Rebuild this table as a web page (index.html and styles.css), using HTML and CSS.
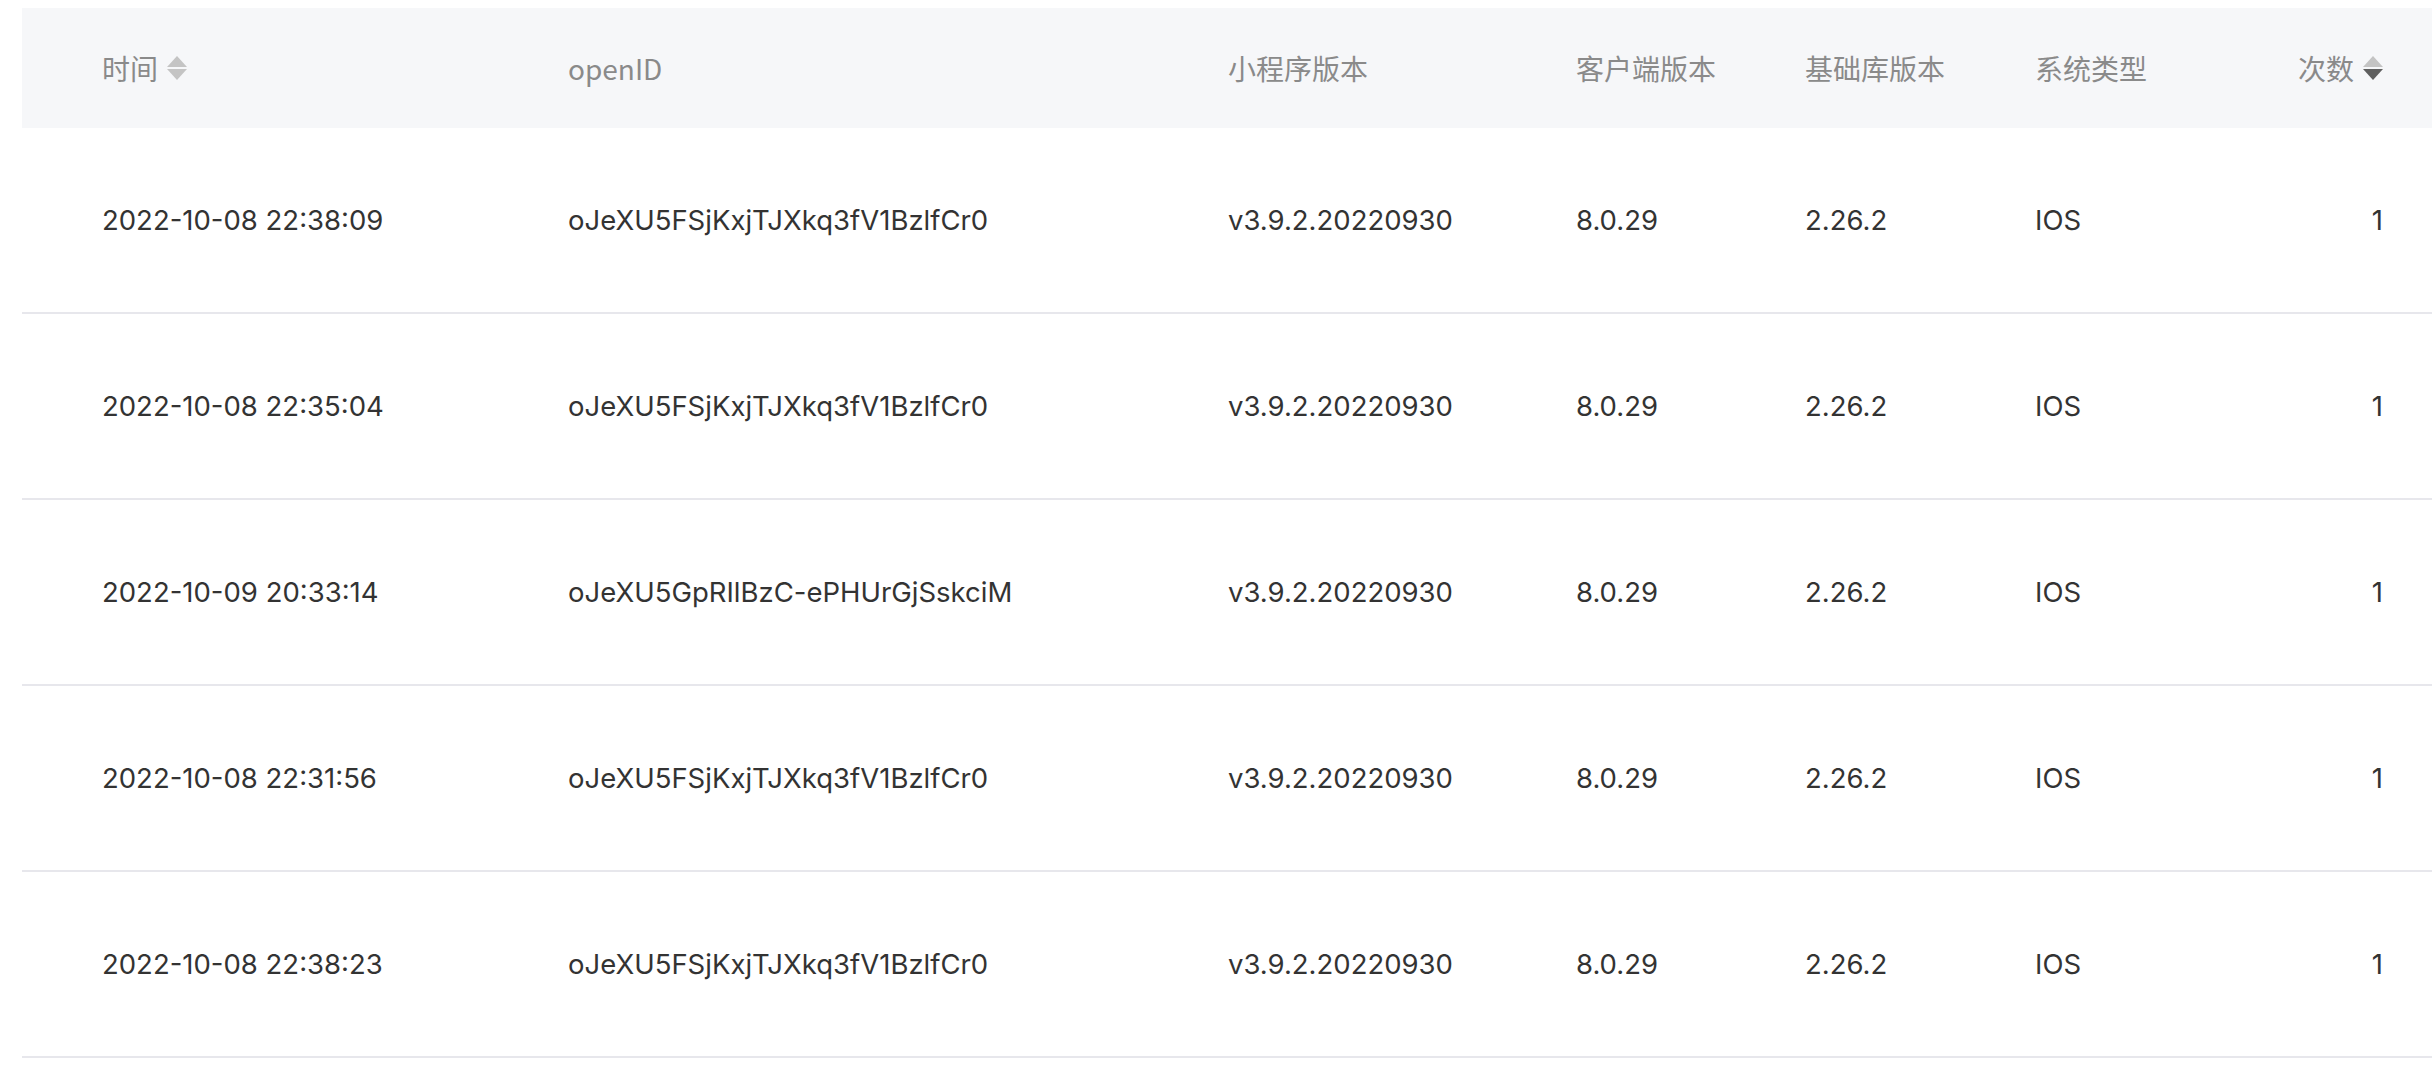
FILE: index.html
```html
<!DOCTYPE html>
<html lang="zh-CN">
<head>
<meta charset="utf-8">
<title>Table</title>
<link rel="stylesheet" href="styles.css">
</head>
<body>
<div class="wrap">
  <div class="table">
    <div class="row head">
      <div class="cell">时间<span class="sort"><i class="up"></i><i class="down"></i></span></div>
      <div class="cell">openID</div>
      <div class="cell">小程序版本</div>
      <div class="cell">客户端版本</div>
      <div class="cell">基础库版本</div>
      <div class="cell">系统类型</div>
      <div class="cell num">次数<span class="sort"><i class="up"></i><i class="down active"></i></span></div>
    </div>
    <div class="row">
      <div class="cell">2022-10-08 22:38:09</div>
      <div class="cell">oJeXU5FSjKxjTJXkq3fV1BzlfCr0</div>
      <div class="cell">v3.9.2.20220930</div>
      <div class="cell">8.0.29</div>
      <div class="cell">2.26.2</div>
      <div class="cell">IOS</div>
      <div class="cell num">1</div>
    </div>
    <div class="row">
      <div class="cell">2022-10-08 22:35:04</div>
      <div class="cell">oJeXU5FSjKxjTJXkq3fV1BzlfCr0</div>
      <div class="cell">v3.9.2.20220930</div>
      <div class="cell">8.0.29</div>
      <div class="cell">2.26.2</div>
      <div class="cell">IOS</div>
      <div class="cell num">1</div>
    </div>
    <div class="row">
      <div class="cell">2022-10-09 20:33:14</div>
      <div class="cell">oJeXU5GpRIlBzC-ePHUrGjSskciM</div>
      <div class="cell">v3.9.2.20220930</div>
      <div class="cell">8.0.29</div>
      <div class="cell">2.26.2</div>
      <div class="cell">IOS</div>
      <div class="cell num">1</div>
    </div>
    <div class="row">
      <div class="cell">2022-10-08 22:31:56</div>
      <div class="cell">oJeXU5FSjKxjTJXkq3fV1BzlfCr0</div>
      <div class="cell">v3.9.2.20220930</div>
      <div class="cell">8.0.29</div>
      <div class="cell">2.26.2</div>
      <div class="cell">IOS</div>
      <div class="cell num">1</div>
    </div>
    <div class="row">
      <div class="cell">2022-10-08 22:38:23</div>
      <div class="cell">oJeXU5FSjKxjTJXkq3fV1BzlfCr0</div>
      <div class="cell">v3.9.2.20220930</div>
      <div class="cell">8.0.29</div>
      <div class="cell">2.26.2</div>
      <div class="cell">IOS</div>
      <div class="cell num">1</div>
    </div>
  </div>
</div>
</body>
</html>
```

FILE: styles.css
```css
html, body {
  margin: 0;
  padding: 0;
  background: #ffffff;
}
body {
  font-family: "Inter", "Noto Sans CJK SC", sans-serif;
  font-size: 27.5px;
  color: #333333;
}
.wrap {
  padding: 8px 0 0 22px;
}
.table {
  display: flex;
  flex-direction: column;
}
.row {
  display: grid;
  grid-template-columns: 466px 660px 348px 229px 230px 1fr auto;
  padding: 0 49px 0 80px;
  height: 184px;
  align-items: center;
  border-bottom: 2px solid #e7e7ec;
}
.row.head {
  height: 120px;
  background: #f6f7f9;
  border-bottom: none;
  color: #8a8a8a;
  font-size: 28px;
  font-family: "Noto Sans CJK SC", "Inter", sans-serif;
}
.cell {
  display: flex;
  align-items: center;
  white-space: nowrap;
}
.cell.num {
  justify-content: flex-end;
}
.sort {
  display: inline-flex;
  flex-direction: column;
  gap: 2px;
  margin-left: 9px;
}
.sort i {
  display: block;
  width: 0;
  height: 0;
  border-left: 10.5px solid transparent;
  border-right: 10.5px solid transparent;
}
.sort .up {
  border-bottom: 11px solid #c4c4c4;
}
.sort .down {
  border-top: 11px solid #c4c4c4;
}
.sort .down.active {
  border-top-color: #5f5f5f;
}
```
